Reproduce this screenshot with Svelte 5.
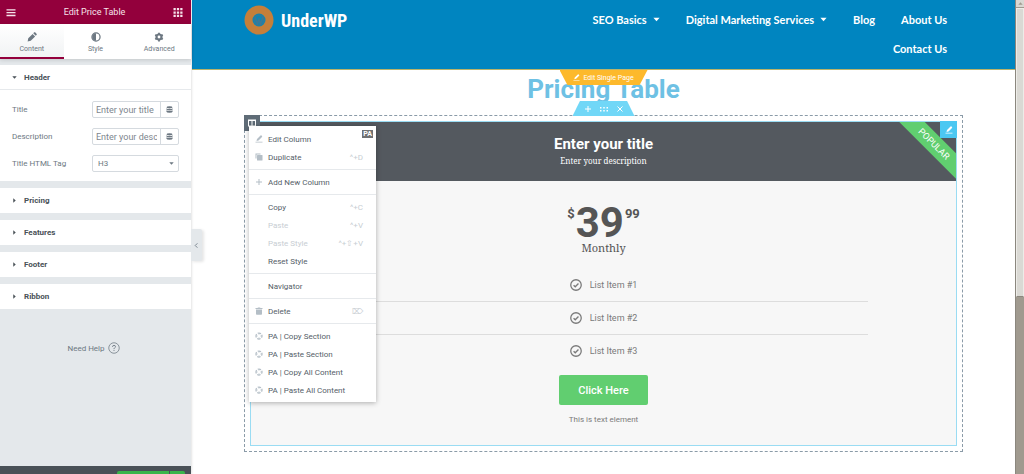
<script lang="ts">
  type MenuItem = { label: string; icon?: string; shortcut?: string; disabled?: boolean };

  let title = $state('');
  let description = $state('');
  let tag = $state('H3');
  let activeTab = $state('Content');

  const tabs = ['Content', 'Style', 'Advanced'];
  const sections = ['Pricing', 'Features', 'Footer', 'Ribbon'];
  const features = ['List Item #1', 'List Item #2', 'List Item #3'];

  const nav = [
    { label: 'SEO Basics', dropdown: true },
    { label: 'Digital Marketing Services', dropdown: true },
    { label: 'Blog', dropdown: false },
    { label: 'About Us', dropdown: false },
    { label: 'Contact Us', dropdown: false }
  ];

  const menuGroups: MenuItem[][] = [
    [
      { label: 'Edit Column', icon: 'edit' },
      { label: 'Duplicate', icon: 'clone', shortcut: '^+D' }
    ],
    [{ label: 'Add New Column', icon: 'plus' }],
    [
      { label: 'Copy', shortcut: '^+C' },
      { label: 'Paste', shortcut: '^+V', disabled: true },
      { label: 'Paste Style', shortcut: '^+⇧+V', disabled: true },
      { label: 'Reset Style' }
    ],
    [{ label: 'Navigator' }],
    [{ label: 'Delete', icon: 'trash', shortcut: '⌦' }],
    [
      { label: 'PA | Copy Section', icon: 'ring' },
      { label: 'PA | Paste Section', icon: 'ring' },
      { label: 'PA | Copy All Content', icon: 'ring' },
      { label: 'PA | Paste All Content', icon: 'ring' }
    ]
  ];
</script>

{#snippet icon(name: string)}
  <svg class="icon" viewBox="0 0 16 16" fill="currentColor" aria-hidden="true">
    {#if name === 'Content'}
      <path d="M1 15l1-5 7-7 4 4-7 7zM10 2l1.500-1.500q.700-.500 1.500 0l2.500 2.500q.500.800 0 1.500L14 6z" />
    {:else if name === 'Style'}
      <circle cx="8" cy="8" r="6.500" fill="none" stroke="currentColor" stroke-width="2" />
      <path d="M8 2a6 6 0 0 0 0 12z" />
    {:else if name === 'Advanced'}
      <circle cx="8" cy="8" r="4" fill="none" stroke="currentColor" stroke-width="3.500" />
      <path d="M6.500 1h3v3h-3zM6.500 12h3v3h-3zM1.200 5.800l1.500-2.600 2.600 1.500-1.500 2.600zM10.700 11.300l1.500-2.600 2.600 1.500-1.500 2.600zM1.200 10.200l1.500 2.600 2.600-1.500-1.500-2.600zM10.700 4.700l1.500 2.600 2.600-1.500-1.500-2.600z" />
    {:else if name === 'edit'}
      <path d="M3 12l1-4 7-7q1-.800 2 0l1 1q.800 1 0 2l-7 7zM1 13.500h14V15H1z" />
    {:else if name === 'clone'}
      <path d="M1 1h10v2H3v8H1z" />
      <rect x="4" y="4" width="11" height="11" rx="1" />
    {:else if name === 'plus'}
      <path d="M7 2h2v5h5v2H9v5H7V9H2V7h5z" />
    {:else if name === 'trash'}
      <path d="M1 2h4l1-1h4l1 1h4v2H1zM2 5h12v9q0 1.500-1.500 1.500h-9Q2 15.500 2 14z" />
    {:else if name === 'ring'}
      <circle cx="8" cy="8" r="6" fill="none" stroke="currentColor" stroke-width="2.500" stroke-dasharray="6.900 2.520" stroke-dashoffset="3.450" />
      <path d="M7 3h2v2H7zM7 11h2v2H7zM3 7h2v2H3zM11 7h2v2h-2z" />
    {:else if name === 'database'}
      <path d="M1 3q0-2.500 7-2.500T15 3t-7 2.500T1 3zM1 5q2 2 7 2t7-2v3q0 2-7 2T1 8zM1 9.500q2 2 7 2t7-2V13q0 2.500-7 2.500T1 13z" />
    {:else if name === 'check'}
      <circle cx="8" cy="8" r="7" fill="none" stroke="currentColor" stroke-width="1.700" />
      <path d="M4.800 8.200l2.200 2.200 4.300-4.300" fill="none" stroke="currentColor" stroke-width="1.800" />
    {:else if name === 'help'}
      <circle cx="8" cy="8" r="7" fill="none" stroke="currentColor" stroke-width="1" />
      <path d="M6 6.500q0-2 2-2t2 1.800q0 1-1.200 1.600Q8 8.400 8 9.500M8 10.800v1.200" fill="none" stroke="currentColor" stroke-width="1.200" />
    {:else if name === 'close'}
      <path d="M3 3l10 10M13 3L3 13" stroke="currentColor" stroke-width="2" />
    {:else if name === 'column'}
      <path d="M0 1h16v14H0zM2 4v9h5V4zM9 4v9h5V4z" fill-rule="evenodd" />
    {:else if name === 'bars'}
      <path d="M0 2h16v2.500H0zM0 7h16v2.500H0zM0 12h16v2.500H0z" />
    {:else if name === 'grid'}
      <path d="M0 0h4v4H0zM6 0h4v4H6zM12 0h4v4h-4zM0 6h4v4H0zM6 6h4v4H6zM12 6h4v4h-4zM0 12h4v4H0zM6 12h4v4H6zM12 12h4v4h-4z" />
    {:else if name === 'dots'}
      <path d="M0 4h3v3H0zM6.500 4h3v3h-3zM13 4h3v3h-3zM0 10h3v3H0zM6.500 10h3v3h-3zM13 10h3v3h-3z" />
    {:else if name === 'chevron'}
      <path d="M10 3L5 8l5 5" fill="none" stroke="currentColor" stroke-width="2" />
    {:else if name === 'down'}
      <path d="M1 4h14l-7 8z" />
    {:else if name === 'right'}
      <path d="M4 1v14l8-7z" />
    {/if}
  </svg>
{/snippet}

<div class="editor">
  <aside class="panel">
    <header class="panel-header">
      <button aria-label="Menu">{@render icon('bars')}</button>
      <h1>Edit Price Table</h1>
      <button aria-label="Widgets">{@render icon('grid')}</button>
    </header>

    <div class="tabs">
      {#each tabs as tab}
        <button class="tab" class:active={activeTab === tab} onclick={() => (activeTab = tab)}>
          {@render icon(tab)}
          <span>{tab}</span>
        </button>
      {/each}
    </div>

    <div class="sections">
      <section class="open">
        <button class="section-toggle">{@render icon('down')}Header</button>
        <div class="controls">
          <div class="control">
            <label for="title">Title</label>
            <div class="field">
              <input id="title" type="text" placeholder="Enter your title" bind:value={title} />
              <button aria-label="Dynamic title">{@render icon('database')}</button>
            </div>
          </div>
          <div class="control">
            <label for="description">Description</label>
            <div class="field">
              <input id="description" type="text" placeholder="Enter your description" bind:value={description} />
              <button aria-label="Dynamic description">{@render icon('database')}</button>
            </div>
          </div>
          <div class="control">
            <label for="tag">Title HTML Tag</label>
            <div class="field select">
              <select id="tag" bind:value={tag}>
                <option>H2</option>
                <option>H3</option>
                <option>H4</option>
              </select>
              {@render icon('down')}
            </div>
          </div>
        </div>
      </section>
      {#each sections as section}
        <section>
          <button class="section-toggle">{@render icon('right')}{section}</button>
        </section>
      {/each}
    </div>

    <a class="help" href="#help">Need Help {@render icon('help')}</a>

    <footer class="panel-footer">
      <button class="publish" aria-label="Update"></button>
      <button class="publish-more" aria-label="Save options"></button>
    </footer>

    <button class="collapse" aria-label="Hide panel">{@render icon('chevron')}</button>
  </aside>

  <main class="preview">
    <header class="site-header">
      <a class="brand" href="#home">
        <svg class="logo" viewBox="0 0 30 30" aria-hidden="true">
          <circle cx="15" cy="15" r="10.500" fill="#0f86b4" stroke="#c57f3a" stroke-width="8" />
          <circle cx="15" cy="15" r="5" fill="none" stroke="#3d7896" stroke-width="1" />
          <path d="M11 12l2.500 7 1.500-5 1.500 5 2.500-7" fill="none" stroke="#3d7896" stroke-width="1.500" />
        </svg>
        UnderWP
      </a>
      <nav>
        {#each nav as item}
          <a href="#nav">{item.label}{#if item.dropdown}{@render icon('down')}{/if}</a>
        {/each}
      </nav>
    </header>

    <div class="page">
      <button class="page-handle">{@render icon('edit')}Edit Single Page</button>
      <h2 class="page-title">Pricing Table</h2>

      <div class="section">
        <div class="section-handle">
          <button aria-label="Add section">{@render icon('plus')}</button>
          <button aria-label="Edit section">{@render icon('dots')}</button>
          <button aria-label="Remove section">{@render icon('close')}</button>
        </div>
        <button class="column-handle" aria-label="Column">{@render icon('column')}</button>

        <div class="price-table">
          <div class="table-header">
            <h3>Enter your title</h3>
            <p>Enter your description</p>
            <div class="ribbon">POPULAR</div>
          </div>
          <button class="widget-handle" aria-label="Edit widget">{@render icon('edit')}</button>
          <div class="price">
            <span class="small">$</span>
            <span class="amount">39</span>
            <span class="small">99</span>
          </div>
          <p class="period">Monthly</p>
          <ul class="features">
            {#each features as feature}
              <li>{@render icon('check')}{feature}</li>
            {/each}
          </ul>
          <button class="cta">Click Here</button>
          <p class="note">This is text element</p>
        </div>

        <div class="context-menu" role="menu">
          <span class="badge">PA</span>
          {#each menuGroups as group}
            <div class="group">
              {#each group as item}
                <button role="menuitem" disabled={item.disabled}>
                  <span class="item-icon">{#if item.icon}{@render icon(item.icon)}{/if}</span>
                  <span class="item-label">{item.label}</span>
                  {#if item.shortcut}<span class="shortcut">{item.shortcut}</span>{/if}
                </button>
              {/each}
            </div>
          {/each}
        </div>
      </div>
    </div>
  </main>

  <div class="scrollbar">
    <div class="scroll-up">{@render icon('down')}</div>
    <div class="thumb"></div>
  </div>
</div>

<style>
  :global(body) {
    font-family: Roboto, 'Liberation Sans', sans-serif;
  }

  .editor {
    display: flex;
    height: 100vh;
    overflow: hidden;
    background: #fff;
  }

  .editor * {
    box-sizing: border-box;
  }

  button,
  input,
  select {
    margin: 0;
    padding: 0;
    border: 0;
    background: none;
    color: inherit;
    font: inherit;
  }

  h1,
  h2,
  h3,
  p,
  ul {
    margin: 0;
    padding: 0;
  }

  a {
    color: inherit;
    text-decoration: none;
  }

  .icon {
    width: 8px;
    height: 8px;
    flex: none;
    display: block;
  }

  /* Editor panel */
  .panel {
    position: relative;
    z-index: 2;
    display: flex;
    flex-direction: column;
    flex: 0 0 191px;
    background: #e4e8eb;
    color: #6d7882;
    box-shadow: 0 0 3px rgba(0, 0, 0, 0.2);
    font-size: 8px;
  }

  .panel-header {
    display: flex;
    align-items: center;
    justify-content: space-between;
    height: 24px;
    padding: 0 8px 0 6px;
    background: #93003c;
    color: #f6e3eb;
  }

  .panel-header h1 {
    font-size: 9px;
    font-weight: 400;
  }

  .panel-header .icon {
    width: 10px;
    height: 9px;
  }

  .tabs {
    display: flex;
    height: 35px;
    background: #fff;
    box-shadow: 0 1px 4px rgba(0, 0, 0, 0.15);
  }

  .tab {
    display: flex;
    flex: 1;
    flex-direction: column;
    align-items: center;
    gap: 2px;
    padding-top: 8px;
    font-size: 7px;
    line-height: 10px;
    border-bottom: 2px solid transparent;
  }

  .tab .icon {
    width: 10px;
    height: 10px;
  }

  .tab.active {
    background: linear-gradient(#fff, #f1f3f4);
    border-bottom-color: #93003c;
  }

  .sections {
    display: flex;
    flex-direction: column;
    gap: 7px;
    margin-top: 6px;
  }

  .sections section {
    background: #fff;
  }

  .section-toggle {
    display: flex;
    align-items: center;
    gap: 7px;
    width: 100%;
    height: 25px;
    padding-left: 12px;
    color: #495157;
    font-weight: 700;
  }

  .section-toggle .icon {
    width: 5px;
    height: 5px;
  }

  .open .section-toggle {
    border-bottom: 1px solid #e6e9ec;
  }

  .controls {
    display: flex;
    flex-direction: column;
    gap: 10px;
    padding: 11px 12px 9px;
  }

  .control {
    display: flex;
    align-items: center;
    justify-content: space-between;
  }

  .field {
    display: flex;
    align-items: center;
    width: 87px;
    height: 17px;
    border: 1px solid #d5dadf;
    border-radius: 2px;
    color: #6d7882;
  }

  .field input {
    flex: 1;
    min-width: 0;
    margin: 0 3px;
    font-size: 9px;
  }

  .field input::placeholder {
    color: #7d868e;
  }

  .field button {
    display: grid;
    place-items: center;
    width: 18px;
    height: 100%;
    border-left: 1px solid #d5dadf;
  }

  .field button .icon {
    width: 7px;
    height: 7px;
  }

  .field select {
    flex: 1;
    padding-left: 5px;
    appearance: none;
  }

  .field.select {
    padding-right: 4px;
  }

  .field.select .icon {
    width: 5px;
    height: 5px;
  }

  .help {
    display: flex;
    align-items: center;
    justify-content: center;
    gap: 3px;
    margin-top: 33px;
    padding-right: 4px;
  }

  .help .icon {
    width: 12px;
    height: 12px;
  }

  .panel-footer {
    display: flex;
    justify-content: flex-end;
    gap: 1px;
    height: 8px;
    margin-top: auto;
    padding: 5px 6px 0 0;
    background: #495157;
    overflow: hidden;
  }

  .publish,
  .publish-more {
    width: 52px;
    height: 16px;
    border-radius: 2px 0 0 0;
    background: #39b54a;
  }

  .publish-more {
    width: 15px;
    border-radius: 0 2px 0 0;
  }

  .collapse {
    position: absolute;
    top: 229px;
    left: 100%;
    display: grid;
    place-items: center;
    width: 11px;
    height: 32px;
    background: #e4e8eb;
    border-radius: 0 2px 2px 0;
    box-shadow: 2px 1px 3px rgba(0, 0, 0, 0.1);
  }

  .collapse .icon {
    width: 7px;
    height: 7px;
  }

  /* Previewed site */
  .preview {
    flex: 1;
    min-width: 0;
    margin-left: 1px;
  }

  .site-header {
    display: flex;
    align-items: flex-start;
    justify-content: space-between;
    padding: 5px 68px 6px 52px;
    background: #0085c0;
    border-bottom: 1px solid #b9b36b;
    color: #fff;
  }

  .brand {
    display: flex;
    align-items: center;
    gap: 7px;
    font-family: 'Roboto Condensed', Roboto, sans-serif;
    font-size: 18px;
    font-weight: 700;
  }

  .logo {
    width: 30px;
    height: 30px;
  }

  nav {
    display: flex;
    flex: 0 0 56%;
    flex-wrap: wrap;
    justify-content: flex-end;
    column-gap: 26px;
    font-family: Lato, sans-serif;
    font-size: 11px;
    font-weight: 700;
  }

  nav a {
    display: flex;
    align-items: center;
    gap: 6px;
    height: 29px;
  }

  nav .icon {
    width: 7px;
    height: 7px;
  }

  .page {
    position: relative;
    padding: 0 52px;
  }

  .page-title {
    padding-bottom: 7px;
    color: #6ec1e4;
    font-size: 26px;
    line-height: 38px;
    text-align: center;
  }

  .page-handle {
    position: absolute;
    top: 0;
    left: 50%;
    display: flex;
    align-items: center;
    justify-content: center;
    gap: 3px;
    width: 88px;
    height: 15px;
    background: #fdb92c;
    color: #fff;
    font-size: 7px;
    white-space: nowrap;
    clip-path: polygon(0 0, 100% 0, 91% 100%, 9% 100%);
    transform: translateX(-50%);
  }

  .page-handle .icon {
    width: 7px;
    height: 7px;
  }

  .section {
    position: relative;
    padding: 5px;
    border: 1px dashed #8b9ba8;
  }

  .section-handle {
    position: absolute;
    bottom: 100%;
    left: 50%;
    display: flex;
    align-items: center;
    justify-content: center;
    gap: 8px;
    width: 62px;
    height: 15px;
    background: #71d7f7;
    color: #fff;
    clip-path: polygon(12% 0, 88% 0, 100% 100%, 0 100%);
    transform: translateX(-50%);
  }

  .column-handle {
    position: absolute;
    top: -1px;
    left: -1px;
    z-index: 1;
    display: grid;
    place-items: center;
    width: 16px;
    height: 16px;
    background: #5f6c77;
    color: #fff;
  }

  .price-table {
    position: relative;
    padding-bottom: 18px;
    border: 1px solid #9adcf3;
    background: #f7f7f7;
    color: #555;
    text-align: center;
  }

  .table-header {
    position: relative;
    padding: 13px 0;
    overflow: hidden;
    background: #54595f;
    color: #fff;
  }

  .table-header h3 {
    font-size: 15px;
    line-height: 18px;
  }

  .table-header p {
    font-family: 'Roboto Slab', 'Noto Serif', 'Liberation Serif', serif;
    font-size: 8px;
    line-height: 15px;
  }

  .ribbon {
    position: absolute;
    top: 13px;
    right: -38px;
    width: 120px;
    background: #61ce70;
    font-size: 9px;
    line-height: 18px;
    transform: rotate(45deg);
  }

  .widget-handle {
    position: absolute;
    top: -1px;
    right: -1px;
    display: grid;
    place-items: center;
    width: 17px;
    height: 17px;
    background: #4cc8f2;
    color: #fff;
  }

  .price {
    display: flex;
    justify-content: center;
    gap: 1px;
    padding-top: 23px;
    font-weight: 700;
  }

  .amount {
    font-size: 42px;
    line-height: 38px;
  }

  .small {
    padding-top: 2px;
    font-size: 13px;
    line-height: 16px;
  }

  .period {
    font-family: 'Roboto Slab', 'Noto Serif', 'Liberation Serif', serif;
    font-size: 11px;
    line-height: 12px;
  }

  .features {
    width: 75%;
    margin: 15px auto 8px;
    color: #7a7a7a;
    font-size: 9px;
    list-style: none;
  }

  .features li {
    display: flex;
    align-items: center;
    justify-content: center;
    gap: 8px;
    height: 32px;
  }

  .features li + li {
    height: 33px;
    border-top: 1px solid #ddd;
  }

  .features .icon {
    width: 12px;
    height: 12px;
  }

  .cta {
    height: 30px;
    padding: 0 19px;
    border-radius: 2px;
    background: #61ce70;
    color: #fff;
    font-size: 11px;
    font-weight: 500;
  }

  .note {
    margin-top: 8px;
    color: #7a7a7a;
    font-size: 8px;
    line-height: 14px;
  }

  /* Context menu */
  .context-menu {
    position: absolute;
    top: 10px;
    left: 4px;
    z-index: 2;
    width: 127px;
    padding-top: 1px;
    background: #fff;
    box-shadow: 0 1px 5px rgba(0, 0, 0, 0.3);
    color: #556068;
    font-size: 8px;
  }

  .group {
    padding: 3px 0;
  }

  .group + .group {
    border-top: 1px solid #e6e9ec;
  }

  .group button {
    display: flex;
    align-items: center;
    width: 100%;
    height: 18px;
    padding: 0 13px 0 6px;
    text-align: left;
  }

  .group button:disabled {
    color: #c8ced3;
  }

  .item-icon {
    width: 13px;
    color: #b4bec6;
  }

  .item-label {
    flex: 1;
  }

  .shortcut {
    color: #c8ced3;
  }

  .badge {
    position: absolute;
    top: 4px;
    right: 3px;
    padding: 0 1px;
    background: #6f7173;
    color: #fff;
    font-size: 7px;
    font-weight: 700;
    line-height: 8px;
  }

  .scrollbar {
    display: flex;
    flex: 0 0 9px;
    flex-direction: column;
    background: #a09a8f;
    border-left: 1px solid #8b877e;
  }

  .scroll-up {
    display: grid;
    place-items: center;
    height: 8px;
    background: #d9d8d3;
    border-bottom: 1px solid #a09a8f;
    color: #a09a8f;
  }

  .scroll-up .icon {
    width: 5px;
    height: 5px;
    transform: rotate(180deg);
  }

  .thumb {
    height: 61%;
    background: #dad9d4;
    border: 1px solid #edece8;
    border-bottom-color: #8b877e;
  }
</style>
